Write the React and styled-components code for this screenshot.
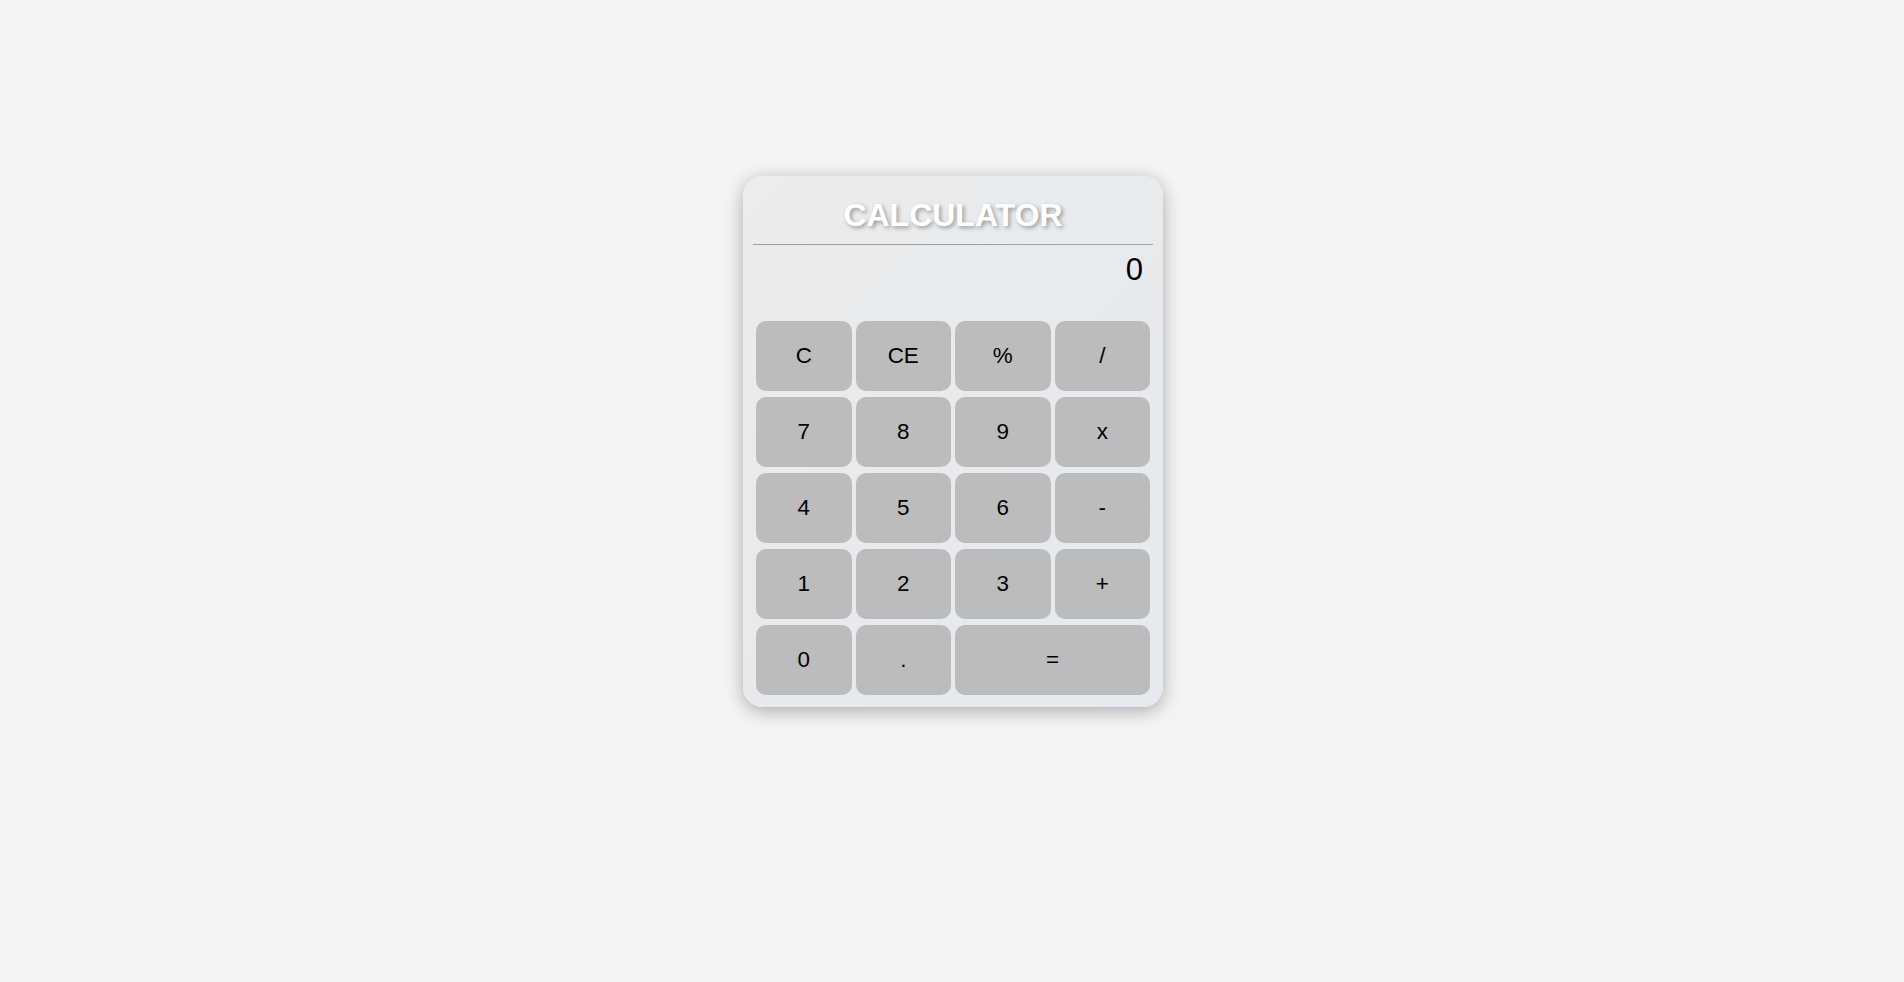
import React, { useState } from 'react';
import styled, { createGlobalStyle } from 'styled-components';

const GlobalStyle = createGlobalStyle`
	body {
		margin: 0;
		background-color: #f4f4f4;
		font-family: "Liberation Sans", Arial, sans-serif;
	}
`;

const Page = styled.div`
	display: flex;
	justify-content: center;
	align-items: flex-start;
	min-height: 100vh;
	box-sizing: border-box;
	padding: 176px 0 0 2px;
`;

const Card = styled.div`
	width: 420px;
	box-sizing: border-box;
	padding: 10px 10px 12px;
	border-radius: 20px;
	background: linear-gradient(135deg, #ececec 0%, #e8eaec 50%, #e6eaee 100%);
	box-shadow: 0 4px 18px rgba(0, 0, 0, 0.3);
`;

const Title = styled.h1`
	margin: 11px 0 10px;
	text-align: center;
	font-size: 32px;
	font-weight: bold;
	color: #ffffff;
	text-shadow: 2px 2px 4px rgba(0, 0, 0, 0.35);
	line-height: 37px;
`;

const Divider = styled.hr`
	margin: 0;
	border: none;
	border-top: 1px solid #a0a0a0;
`;

const Display = styled.div`
	height: 66px;
	padding: 8px 10px 0;
	text-align: right;
	font-size: 31px;
	color: #000;
	line-height: 34px;
	box-sizing: border-box;
	margin-bottom: 10px;
`;

const Keys = styled.div`
	display: grid;
	grid-template-columns: repeat(4, 1fr);
	grid-auto-rows: 70px;
	gap: 6px 4px;
	padding: 0 3px;
`;

const Key = styled.button`
	grid-column: span ${(props) => props.$span || 1};
	border: none;
	outline: none;
	border-radius: 10px;
	background-color: #bcbcbc;
	color: #000;
	font-family: "Liberation Sans", Arial, sans-serif;
	font-size: 22.4px;
	cursor: pointer;

	&:hover {
		background-color: #b0b0b0;
	}
`;

const keys = [
	['C'], ['CE'], ['%'], ['/'],
	['7'], ['8'], ['9'], ['x'],
	['4'], ['5'], ['6'], ['-'],
	['1'], ['2'], ['3'], ['+'],
	['0'], ['.'], ['=', 2],
];

const App = () => {
	const [value, setValue] = useState('0');

	const press = (k) => {
		if (k === 'C' || k === 'CE') return setValue('0');
		if (k === '=') {
			try {
				const expr = value.replace(/x/g, '*').replace(/%/g, '/100');
				// eslint-disable-next-line no-new-func
				setValue(String(Function(`return (${expr})`)()));
			} catch (e) {
				setValue('Error');
			}
			return;
		}
		setValue((v) => (v === '0' && k !== '.' ? k : v + k));
	};

	return (
		<>
			<GlobalStyle />
			<Page>
				<Card>
					<Title>CALCULATOR</Title>
					<Divider />
					<Display>{value}</Display>
					<Keys>
						{keys.map(([k, span]) => (
							<Key key={k} $span={span} onClick={() => press(k)}>
								{k}
							</Key>
						))}
					</Keys>
				</Card>
			</Page>
		</>
	);
};

export default App;
